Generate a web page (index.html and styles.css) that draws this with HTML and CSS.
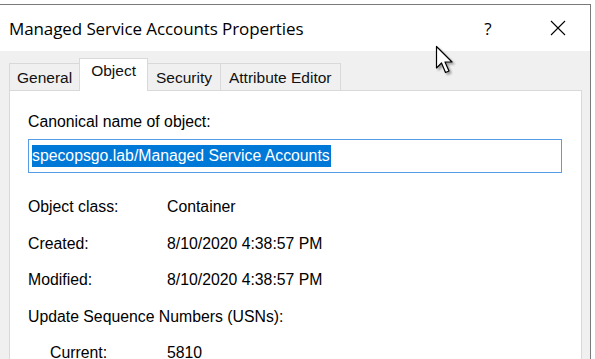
FILE: index.html
```html
<!DOCTYPE html>
<html lang="en">
<head>
    <meta charset="UTF-8">
    <title>Managed Service Accounts Properties</title>
    <link rel="stylesheet" href="styles.css">
</head>
<body>
    <div class="janela">
        <div class="titulo">
            <span class="titulo-texto">Managed Service Accounts Properties</span>
            <span class="ajuda">?</span>
            <span class="fechar">
                <svg width="16" height="16" viewBox="0 0 16 16"><path d="M1 1 L15 15 M15 1 L1 15" stroke="#000" stroke-width="1.1" fill="none"/></svg>
            </span>
        </div>
        <div class="corpo">
            <div class="abas">
                <div class="aba">General</div>
                <div class="aba ativa">Object</div>
                <div class="aba">Security</div>
                <div class="aba">Attribute Editor</div>
            </div>
            <div class="painel">
                <div class="rotulo">Canonical name of object:</div>
                <div class="caixa"><span class="selecionado">specopsgo.lab/Managed Service Accounts</span></div>
                <div class="linha"><span class="chave">Object class:</span><span>Container</span></div>
                <div class="linha"><span class="chave">Created:</span><span>8/10/2020 4:38:57 PM</span></div>
                <div class="linha"><span class="chave">Modified:</span><span>8/10/2020 4:38:57 PM</span></div>
                <div class="linha"><span>Update Sequence Numbers (USNs):</span></div>
                <div class="linha sub"><span class="chave">Current:</span><span>5810</span></div>
            </div>
        </div>
        <svg class="cursor" width="22" height="32" viewBox="0 0 22 32">
            <path d="M1.5 1.5 L1.5 23 L6.5 18 L10.5 27.5 L14 26 L10 17 L17 17 Z" fill="#fff" stroke="#000" stroke-width="1.2" stroke-linejoin="round"/>
        </svg>
    </div>
</body>
</html>
```

FILE: styles.css
```css
body {
    margin: 0;
    background: #fff;
    font-family: "Liberation Sans", Arial, sans-serif;
    color: #000;
    overflow: hidden;
}
.janela {
    position: relative;
    width: 590px;
    height: 359px;
    margin-top: 4px;
    border-top: 1px solid #7a7a7a;
    border-right: 1px solid #7a7a7a;
    overflow: hidden;
}
.titulo {
    height: 46px;
    display: flex;
    align-items: center;
    background: #fff;
}
.titulo-texto {
    font-family: "Open Sans", "Noto Sans", sans-serif;
    font-size: 17px;
    margin-left: 9px;
    flex: 1;
    letter-spacing: -0.1px;
}
.ajuda {
    font-family: "Open Sans", sans-serif;
    font-size: 17px;
    width: 20px;
    text-align: center;
    margin-right: 52px;
}
.fechar {
    width: 16px;
    margin-right: 24px;
    display: flex;
}
.corpo {
    background: #f0f0f0;
    height: 320px;
    padding: 10px 8px 0 9px;
}
.abas {
    display: flex;
    align-items: flex-end;
    height: 29px;
}
.aba {
    font-size: 15.5px;
    height: 26px;
    line-height: 27px;
    padding: 0 8px;
    border: 1px solid #d9d9d9;
    border-bottom: none;
    border-left: none;
    background: #f0f0f0;
    color: #111;
}
.aba:first-child {
    border-left: 1px solid #d9d9d9;
    padding: 0 7px;
}
.aba.ativa {
    background: #fff;
    height: 29px;
    line-height: 24px;
    padding: 0 11px 3px;
    border-left: 1px solid #d9d9d9;
    margin-left: -1px;
    margin-bottom: -1px;
    position: relative;
}
.painel {
    background: #fff;
    border: 1px solid #d9d9d9;
    height: 300px;
    padding: 21px 18px 0 18px;
    font-size: 15.8px;
}
.rotulo {
    height: 20px;
    line-height: 20px;
}
.caixa {
    margin-top: 7px;
    height: 32px;
    border: 1px solid #569de5;
    display: flex;
    align-items: center;
    padding-left: 3px;
    margin-right: 1px;
}
.selecionado {
    background: #0078d7;
    color: #fff;
    line-height: 22px;
    padding-right: 1px;
}
.linha {
    display: flex;
    height: 36.5px;
    align-items: center;
}
.linha:nth-child(3) {
    margin-top: 16px;
}
.chave {
    width: 139px;
}
.sub {
    padding-left: 22px;
}
.sub .chave {
    width: 117px;
}
.cursor {
    position: absolute;
    left: 435px;
    top: 40px;
    filter: drop-shadow(2px 2px 1px rgba(0,0,0,0.35));
}
```
